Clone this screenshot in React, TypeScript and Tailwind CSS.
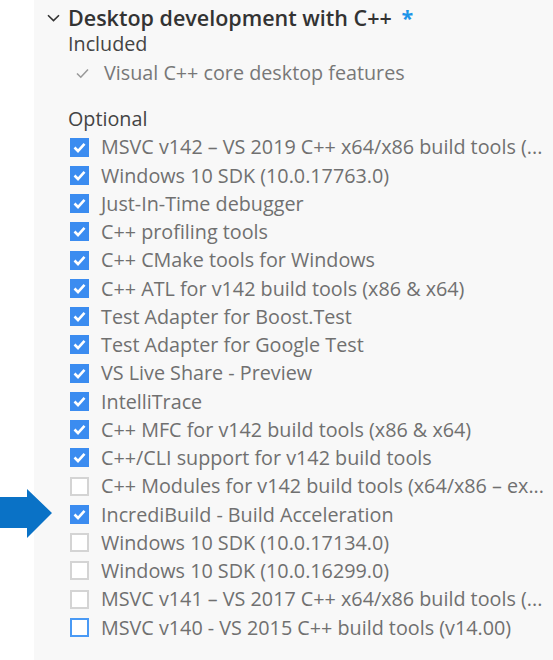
const items = [
  { label: "MSVC v142 – VS 2019 C++ x64/x86 build tools (...", checked: true },
  { label: "Windows 10 SDK (10.0.17763.0)", checked: true },
  { label: "Just-In-Time debugger", checked: true },
  { label: "C++ profiling tools", checked: true },
  { label: "C++ CMake tools for Windows", checked: true },
  { label: "C++ ATL for v142 build tools (x86 & x64)", checked: true },
  { label: "Test Adapter for Boost.Test", checked: true },
  { label: "Test Adapter for Google Test", checked: true },
  { label: "VS Live Share - Preview", checked: true },
  { label: "IntelliTrace", checked: true },
  { label: "C++ MFC for v142 build tools (x86 & x64)", checked: true },
  { label: "C++/CLI support for v142 build tools", checked: true },
  { label: "C++ Modules for v142 build tools (x64/x86 – ex...", checked: false },
  { label: "IncrediBuild - Build Acceleration", checked: true },
  { label: "Windows 10 SDK (10.0.17134.0)", checked: false },
  { label: "Windows 10 SDK (10.0.16299.0)", checked: false },
  { label: "MSVC v141 – VS 2017 C++ x64/x86 build tools (...", checked: false },
  { label: "MSVC v140 - VS 2015 C++ build tools (v14.00)", checked: false, focused: true },
];

function Checkbox({ checked, focused }: { checked: boolean; focused?: boolean }) {
  if (checked) {
    return (
      <div className="w-[19px] h-[19px] shrink-0 bg-[#3b8cf0] flex items-center justify-center">
        <svg width="13" height="11" viewBox="0 0 13 11">
          <polyline points="1.5,5.5 5,9 11.5,1.8" fill="none" stroke="#fff" strokeWidth="2.6" />
        </svg>
      </div>
    );
  }
  return (
    <div
      className={
        focused
          ? "w-[19px] h-[19px] shrink-0 border-2 border-[#4a9af5] bg-white"
          : "w-[19px] h-[19px] shrink-0 border-2 border-[#d4d4d4] bg-white"
      }
    />
  );
}

export default function App() {
  return (
    <div
      className="relative w-[553px] h-[660px] bg-white flex"
      style={{ fontFamily: '"Open Sans", "Noto Sans", sans-serif' }}
    >
      {/* callout arrow */}
      <svg className="absolute left-0 top-[489px]" width="53" height="50" viewBox="0 0 53 50">
        <polygon points="0,8 27,8 27,0 52,24 27,49 27,39 0,39" fill="#0a72c6" />
      </svg>

      <div className="w-[34px] shrink-0" />

      <div className="flex-1 bg-[#f8f8f8] flex flex-col overflow-hidden">
        {/* Workload title */}
        <div className="h-[36px] flex items-center pl-[13px]">
          <svg width="13" height="8" viewBox="0 0 13 8" className="shrink-0">
            <polyline points="1,1.2 6.5,6.6 12,1.2" fill="none" stroke="#333" strokeWidth="1.6" />
          </svg>
          <span className="ml-[8px] text-[21.5px] font-semibold text-[#333] whitespace-nowrap">
            Desktop development with C++ <span className="ml-[4px] text-[#1e94e8] font-bold">*</span>
          </span>
        </div>

        <div className="h-[16px] flex items-center pl-[34px] text-[19.75px] text-[#444]">Included</div>

        <div className="h-[42px] flex items-center pl-[42px] text-[19.75px] text-[#777]">
          <svg width="13" height="11" viewBox="0 0 13 11" className="shrink-0">
            <polyline points="1,5.5 4.8,9.2 12,1.5" fill="none" stroke="#999" strokeWidth="1.6" />
          </svg>
          <span className="ml-[15px] whitespace-nowrap">Visual C++ core desktop features</span>
        </div>

        <div className="mt-[11px] h-[28px] flex items-center pl-[34px] text-[19.75px] text-[#444]">Optional</div>

        <div className="flex flex-col">
          {items.map((item, i) => (
            <div key={i} className="h-[28.25px] flex items-center pl-[36px]">
              <Checkbox checked={item.checked} focused={item.focused} />
              <span className="ml-[12px] text-[19.75px] text-[#707070] whitespace-nowrap">{item.label}</span>
            </div>
          ))}
        </div>
      </div>
    </div>
  );
}
